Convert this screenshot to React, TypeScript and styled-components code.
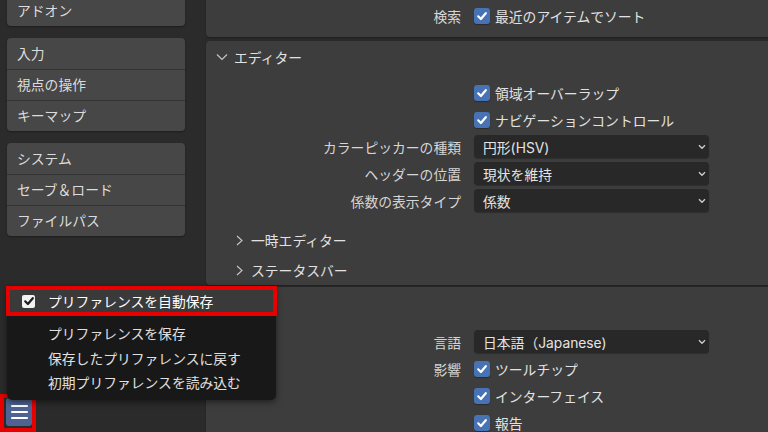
import React from "react";
import styled, { createGlobalStyle } from "styled-components";

const Global = createGlobalStyle`
  html, body { margin: 0; padding: 0; background: #2b2b2b; overflow: hidden; }
  #root { width: 768px; height: 432px; }
`;

const FONT = `Inter, "Noto Sans CJK JP", "Noto Sans", sans-serif`;

const Page = styled.div`
  position: relative;
  display: flex;
  width: 768px;
  height: 432px;
  overflow: hidden;
  background: #2b2b2b;
  color: #e2e2e2;
  font-family: ${FONT};
  font-size: 13.8px;
`;

const Sidebar = styled.nav`
  flex: none;
  width: 206px;
  box-sizing: border-box;
  padding: 0 21px 6px 7px;
  display: flex;
  flex-direction: column;
`;

const NavGroup = styled.div<{ $top: number }>`
  flex: none;
  margin-top: ${(p) => p.$top}px;
  background: #474747;
  border-radius: 4px;
  box-shadow: 0 1px 2px rgba(0, 0, 0, 0.35);
  overflow: hidden;
`;

const NavItem = styled.div`
  height: 31px;
  box-sizing: border-box;
  display: flex;
  align-items: center;
  padding: 0 0 2px 10px;
  color: #dcdcdc;
  & + & {
    border-top: 1px solid #333333;
  }
`;

const MenuButtonWrap = styled.div`
  position: relative;
  flex: none;
  margin-top: auto;
  width: 26px;
  height: 28px;
  margin-left: -1px;
`;

const MenuButton = styled.div`
  width: 26px;
  height: 28px;
  box-sizing: border-box;
  background: #4e6391;
  border-radius: 3px;
  display: flex;
  flex-direction: column;
  justify-content: center;
  align-items: center;
  gap: 4px;
`;

const Bar = styled.span`
  display: block;
  width: 17px;
  height: 2px;
  background: #ffffff;
  border-radius: 1px;
`;

const RedMark = styled.div`
  position: absolute;
  left: -6px;
  top: -4px;
  width: 36px;
  height: 38px;
  box-sizing: border-box;
  border: 4px solid #e60000;
  pointer-events: none;
`;

const Main = styled.main`
  flex: 1;
  display: flex;
  flex-direction: column;
  margin-right: -8px;
  min-height: 0;
`;

const Panel = styled.section<{ $top: number; $h?: number }>`
  margin-top: ${(p) => p.$top}px;
  ${(p) => (p.$h ? `height: ${p.$h}px; flex: none;` : "flex: 1 0 auto;")}
  box-sizing: border-box;
  background: #3d3d3d;
  border-radius: 4px;
  box-shadow: 0 1px 2px rgba(0, 0, 0, 0.3);
  display: flex;
  flex-direction: column;
`;

const PanelHeader = styled.div<{ $indent: number; $h: number; $mt?: number }>`
  height: ${(p) => p.$h}px;
  margin-top: ${(p) => p.$mt ?? 0}px;
  flex: none;
  display: flex;
  align-items: center;
  gap: ${(p) => (p.$indent > 20 ? 8 : 6)}px;
  padding-left: ${(p) => p.$indent}px;
  color: #e2e2e2;
`;

const Form = styled.div<{ $pt: number }>`
  flex: none;
  padding-top: ${(p) => p.$pt}px;
  display: grid;
  grid-template-columns: 255px 235px;
  grid-auto-rows: 27px;
  column-gap: 13px;
`;

const Label = styled.div`
  display: flex;
  align-items: center;
  justify-content: flex-end;
  color: #d6d6d6;
  white-space: nowrap;
`;

const Control = styled.div`
  display: flex;
  align-items: center;
  white-space: nowrap;
`;

const CheckBox = styled.span`
  flex: none;
  width: 16px;
  height: 16px;
  border-radius: 3px;
  background: #4772b3;
  display: inline-flex;
  align-items: center;
  justify-content: center;
  margin-right: 5px;
  box-shadow: 0 1px 1px rgba(0, 0, 0, 0.3);
`;

const Select = styled.div`
  width: 100%;
  height: 23px;
  box-sizing: border-box;
  background: #282828;
  border-radius: 4px;
  box-shadow: 0 1px 1px rgba(0, 0, 0, 0.25);
  display: flex;
  align-items: center;
  justify-content: space-between;
  padding: 0 3px 0 9px;
  color: #e4e4e4;
`;

const Popup = styled.div`
  position: absolute;
  left: 7px;
  top: 286px;
  width: 269px;
  height: 114px;
  background: #181818;
  border-radius: 0 0 5px 5px;
  box-shadow: 0 2px 6px rgba(0, 0, 0, 0.5);
  display: flex;
  flex-direction: column;
  color: #e0e0e0;
`;

const PopupActive = styled.div`
  margin: 0 -1px;
  height: 30px;
  box-sizing: border-box;
  border: 4px solid #e60000;
  background: #3a3a3a;
  display: flex;
  align-items: center;
  padding-left: 12px;
  gap: 13px;
  color: #ffffff;
`;

const WhiteBox = styled.span`
  width: 13px;
  height: 13px;
  border-radius: 2px;
  background: #f2f2f2;
  display: inline-flex;
  align-items: center;
  justify-content: center;
`;

const PopupItem = styled.div<{ $first?: boolean }>`
  height: 24.5px;
  margin-top: ${(p) => (p.$first ? 5 : 0)}px;
  display: flex;
  align-items: center;
  padding-left: 41px;
`;

const Check = ({ color = "#ffffff" }: { color?: string }) => (
  <svg width="12" height="12" viewBox="0 0 12 12">
    <polyline points="2.2,6.3 4.9,9 9.8,3.2" fill="none" stroke={color} strokeWidth="2.2" strokeLinecap="round" strokeLinejoin="round" />
  </svg>
);

const ChevronDown = () => (
  <svg width="12" height="8" viewBox="0 0 12 8">
    <polyline points="1,1.5 6,6.5 11,1.5" fill="none" stroke="#c4c4c4" strokeWidth="1.2" />
  </svg>
);

const ChevronRight = () => (
  <svg width="7" height="11" viewBox="0 0 7 11">
    <polyline points="1,1 6,5.5 1,10" fill="none" stroke="#c4c4c4" strokeWidth="1.2" />
  </svg>
);

const SmallDown = () => (
  <svg width="8" height="6" viewBox="0 0 8 6">
    <polyline points="1,1.3 4,4.3 7,1.3" fill="none" stroke="#d0d0d0" strokeWidth="1.3" />
  </svg>
);

const CheckRow = ({ label, text }: { label?: string; text: string }) => (
  <>
    <Label>{label ?? ""}</Label>
    <Control>
      <CheckBox>
        <Check />
      </CheckBox>
      {text}
    </Control>
  </>
);

const SelectRow = ({ label, value }: { label: string; value: string }) => (
  <>
    <Label>{label}</Label>
    <Control>
      <Select>
        <span>{value}</span>
        <SmallDown />
      </Select>
    </Control>
  </>
);

export default function App() {
  return (
    <Page>
      <Global />
      <Sidebar>
        <NavGroup $top={-5}>
          <NavItem>アドオン</NavItem>
        </NavGroup>
        <NavGroup $top={12}>
          <NavItem>入力</NavItem>
          <NavItem>視点の操作</NavItem>
          <NavItem>キーマップ</NavItem>
        </NavGroup>
        <NavGroup $top={12}>
          <NavItem>システム</NavItem>
          <NavItem>セーブ＆ロード</NavItem>
          <NavItem>ファイルパス</NavItem>
        </NavGroup>
        <MenuButtonWrap>
          <MenuButton>
            <Bar />
            <Bar />
            <Bar />
          </MenuButton>
          <RedMark />
        </MenuButtonWrap>
      </Sidebar>
      <Main>
        <Panel $top={-6} $h={43}>
          <Form $pt={8}>
            <CheckRow label="検索" text="最近のアイテムでソート" />
          </Form>
        </Panel>
        <Panel $top={4} $h={244}>
          <PanelHeader $indent={10} $h={32}>
            <ChevronDown />
            エディター
          </PanelHeader>
          <Form $pt={6}>
            <CheckRow text="領域オーバーラップ" />
            <CheckRow text="ナビゲーションコントロール" />
            <SelectRow label="カラーピッカーの種類" value="円形(HSV)" />
            <SelectRow label="ヘッダーの位置" value="現状を維持" />
            <SelectRow label="係数の表示タイプ" value="係数" />
          </Form>
          <PanelHeader $indent={30} $h={30} $mt={11}>
            <ChevronRight />
            一時エディター
          </PanelHeader>
          <PanelHeader $indent={30} $h={30}>
            <ChevronRight />
            ステータスバー
          </PanelHeader>
        </Panel>
        <Panel $top={2}>
          <PanelHeader $indent={10} $h={32}>
            <ChevronDown />
            翻訳
          </PanelHeader>
          <Form $pt={9}>
            <SelectRow label="言語" value="日本語（Japanese)" />
            <CheckRow label="影響" text="ツールチップ" />
            <CheckRow text="インターフェイス" />
            <CheckRow text="報告" />
          </Form>
        </Panel>
      </Main>
      <Popup>
        <PopupActive>
          <WhiteBox>
            <Check color="#1c1c1c" />
          </WhiteBox>
          プリファレンスを自動保存
        </PopupActive>
        <PopupItem $first>プリファレンスを保存</PopupItem>
        <PopupItem>保存したプリファレンスに戻す</PopupItem>
        <PopupItem>初期プリファレンスを読み込む</PopupItem>
      </Popup>
    </Page>
  );
}
